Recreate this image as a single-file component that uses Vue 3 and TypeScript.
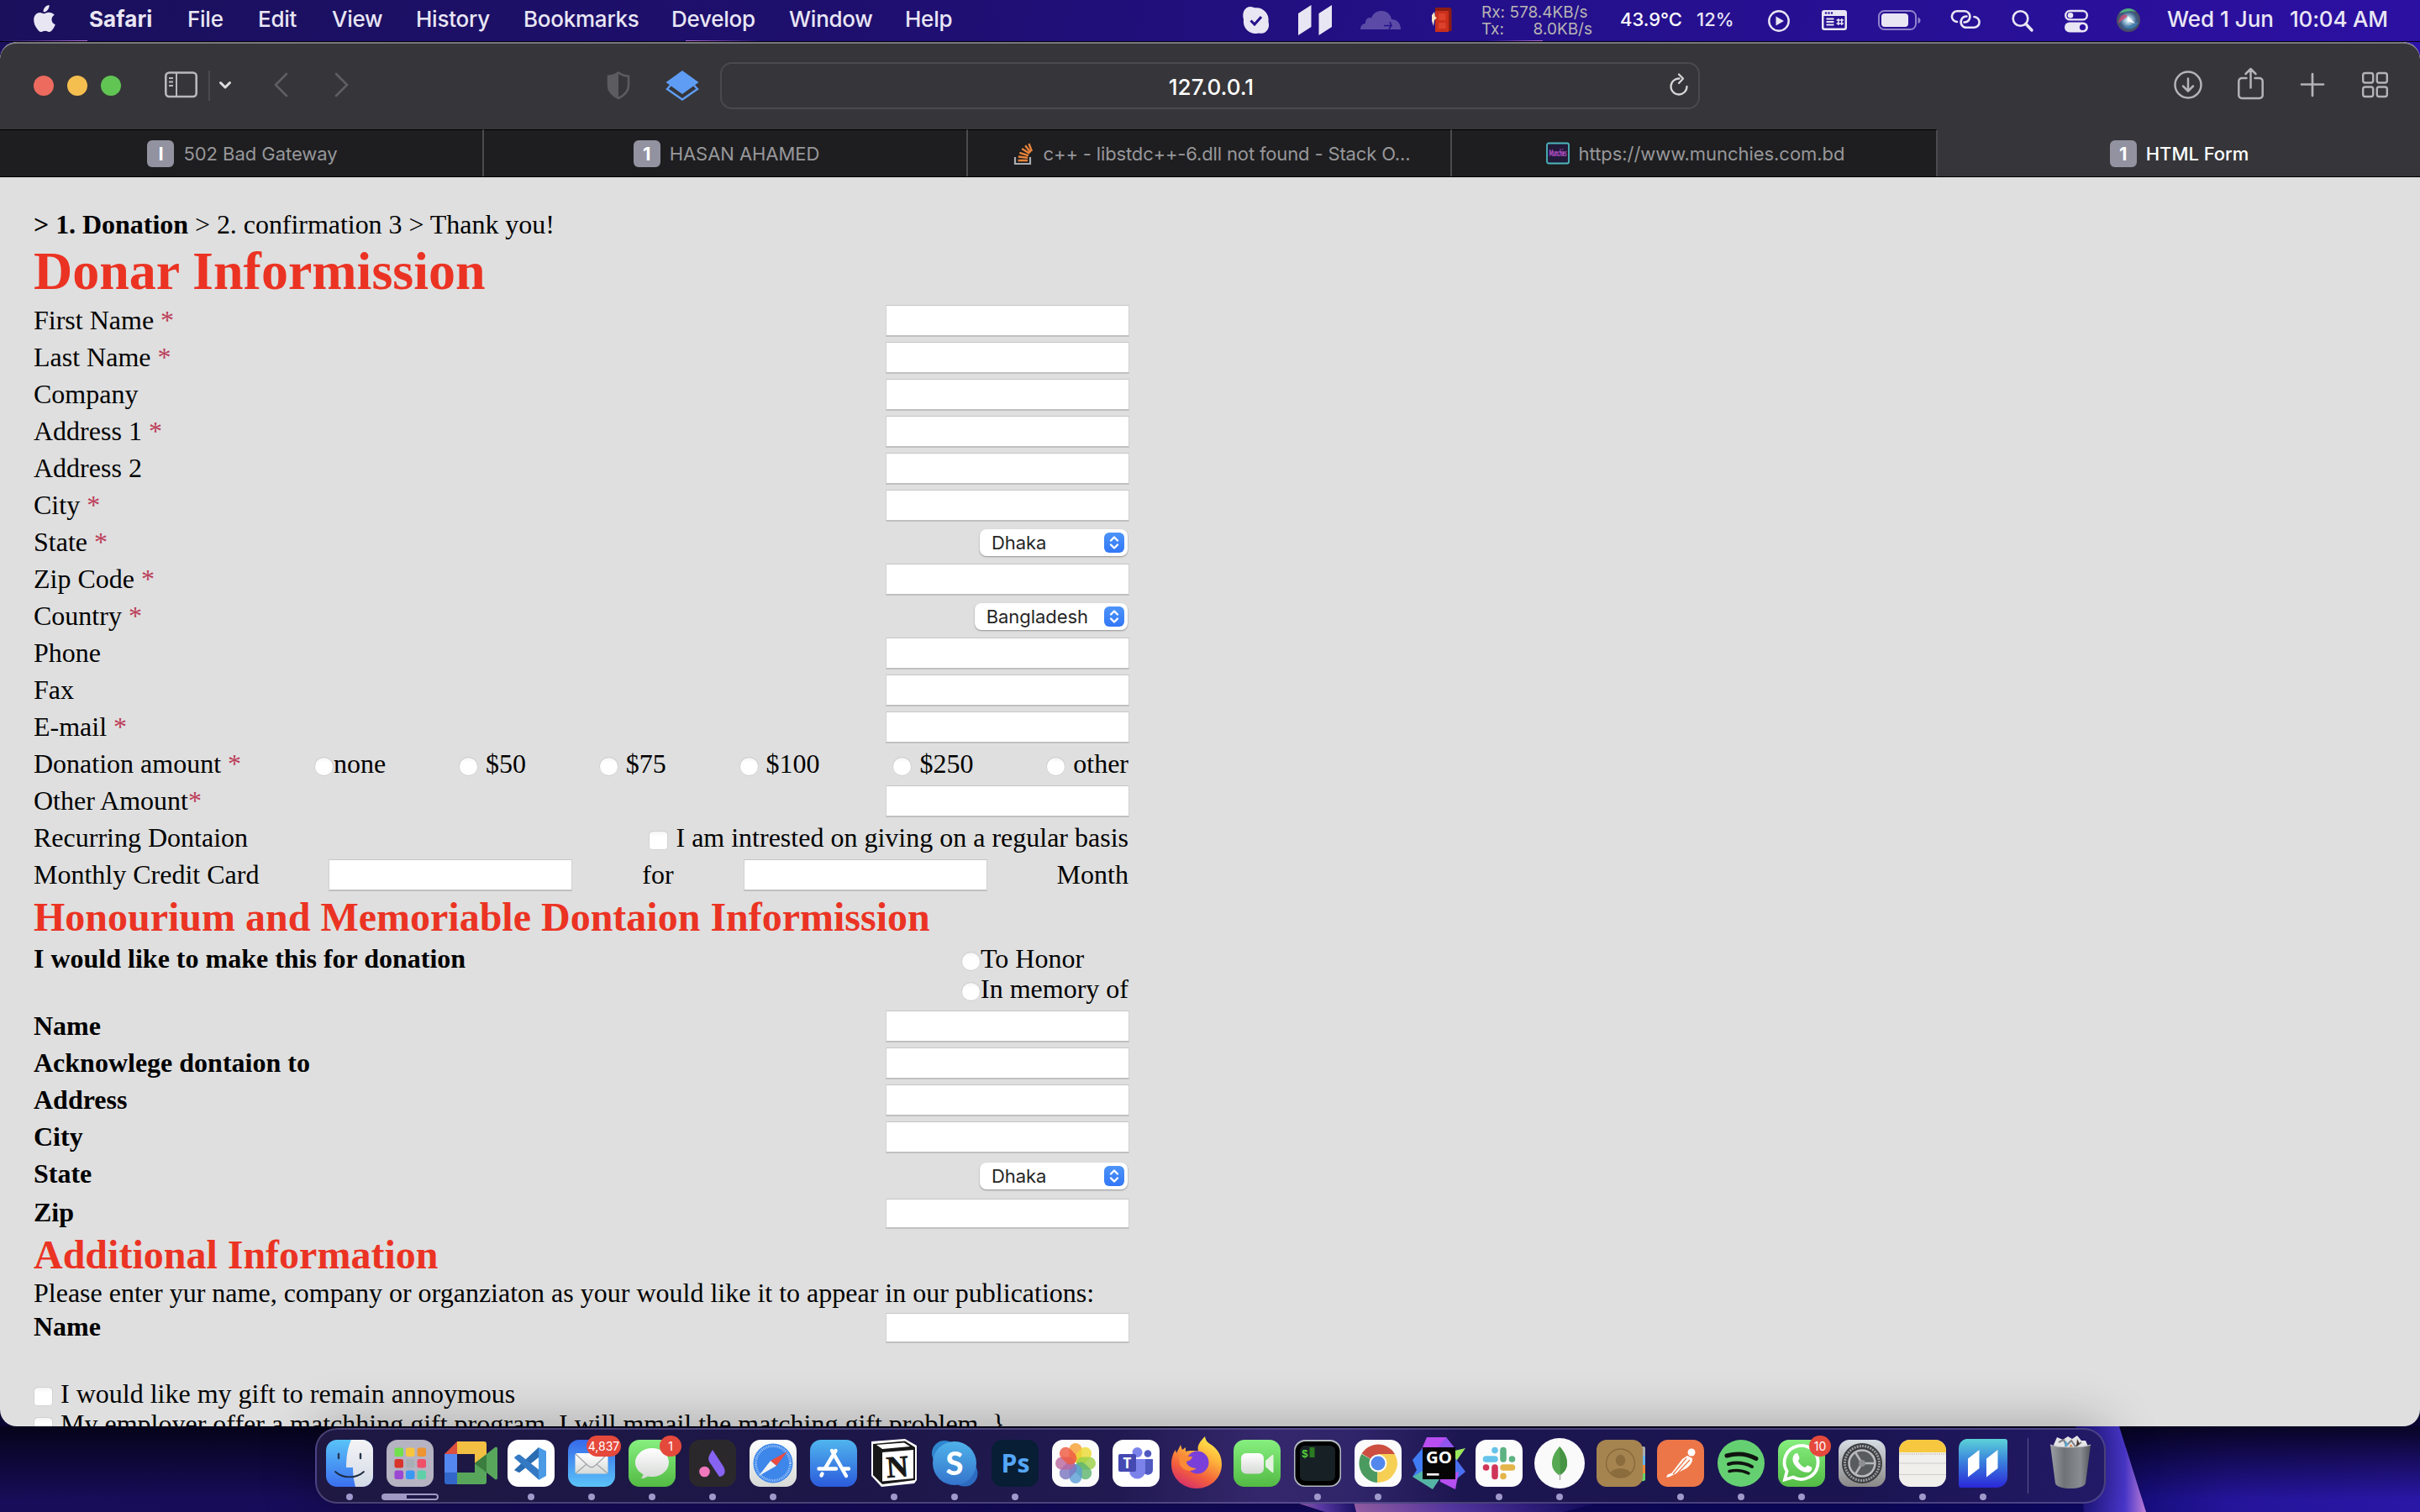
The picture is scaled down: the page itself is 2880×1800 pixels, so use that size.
<script setup lang="ts">
interface Field {
  label: string
  required?: boolean
  select?: string
}

interface MenuEntry {
  label: string
  width: number
}

interface Tab {
  title: string
  badge?: string
  icon?: 'stack' | 'munchies'
  active?: boolean
}

const menu: MenuEntry[] = [
  { label: 'File', width: 84 },
  { label: 'Edit', width: 88 },
  { label: 'View', width: 100 },
  { label: 'History', width: 128 },
  { label: 'Bookmarks', width: 176 },
  { label: 'Develop', width: 140 },
  { label: 'Window', width: 138 },
  { label: 'Help', width: 60 },
]

const tabs: Tab[] = [
  { title: '502 Bad Gateway', badge: 'I' },
  { title: 'HASAN AHAMED', badge: '1' },
  { title: 'c++ - libstdc++-6.dll not found - Stack O...', icon: 'stack' },
  { title: 'https://www.munchies.com.bd', icon: 'munchies' },
  { title: 'HTML Form', badge: '1', active: true },
]

const donorFields: Field[] = [
  { label: 'First Name', required: true },
  { label: 'Last Name', required: true },
  { label: 'Company' },
  { label: 'Address 1', required: true },
  { label: 'Address 2' },
  { label: 'City', required: true },
  { label: 'State', required: true, select: 'Dhaka' },
  { label: 'Zip Code', required: true },
  { label: 'Country', required: true, select: 'Bangladesh' },
  { label: 'Phone' },
  { label: 'Fax' },
  { label: 'E-mail', required: true },
]

const amounts = ['none', '$50', '$75', '$100', '$250', 'other']

const honorFields: Field[] = [
  { label: 'Name' },
  { label: 'Acknowlege dontaion to' },
  { label: 'Address' },
  { label: 'City' },
  { label: 'State', select: 'Dhaka' },
  { label: 'Zip' },
]

const padColors = [
  '#72e04e', '#f7c63f', '#ee9430',
  '#d8342c', '#a9b0b5', '#f0506a',
  '#9a47d2', '#3a98f5', '#5fd0a8',
]

const petals = [
  '#f5a033', '#ecd935', '#9ccf45', '#5fb56f',
  '#5b9fd6', '#7a76c0', '#b9689f', '#ee5a41',
]
</script>

<template>
  <div class="desktop">
    <svg class="defs" width="0" height="0">
      <defs>
        <linearGradient id="gFinder" x1="0" y1="0" x2="0" y2="1"><stop offset="0" stop-color="#59c3f7" /><stop offset="1" stop-color="#3b6ff0" /></linearGradient>
        <linearGradient id="gFace" x1="0" y1="0" x2="0" y2="1"><stop offset="0" stop-color="#f4f4f6" /><stop offset="1" stop-color="#d3dae6" /></linearGradient>
        <linearGradient id="gMail" x1="0" y1="0" x2="0" y2="1"><stop offset="0" stop-color="#3669ea" /><stop offset="1" stop-color="#5bc3f8" /></linearGradient>
        <linearGradient id="gGreen" x1="0" y1="0" x2="0" y2="1"><stop offset="0" stop-color="#86ef7f" /><stop offset="1" stop-color="#53bb44" /></linearGradient>
        <linearGradient id="gWhite" x1="0" y1="0" x2="0" y2="1"><stop offset="0" stop-color="#ffffff" /><stop offset="1" stop-color="#d6d9d6" /></linearGradient>
        <linearGradient id="gStore" x1="0" y1="0" x2="0" y2="1"><stop offset="0" stop-color="#50b5ee" /><stop offset="1" stop-color="#2b5bdc" /></linearGradient>
        <linearGradient id="gSkype" x1="0" y1="0" x2="0" y2="1"><stop offset="0" stop-color="#4fb2ea" /><stop offset="1" stop-color="#3474cc" /></linearGradient>
        <linearGradient id="gFox" x1="0.8" y1="0" x2="0.3" y2="1"><stop offset="0" stop-color="#fff04f" /><stop offset="0.35" stop-color="#ffb43a" /><stop offset="0.7" stop-color="#f4603c" /><stop offset="1" stop-color="#d72f6b" /></linearGradient>
        <linearGradient id="gGo" x1="0" y1="0" x2="0" y2="1"><stop offset="0" stop-color="#b04cf0" /><stop offset="0.5" stop-color="#3f7cf3" /><stop offset="0.8" stop-color="#54a0d0" /><stop offset="1" stop-color="#8a55f0" /></linearGradient>
        <linearGradient id="gBars" x1="0" y1="0" x2="0" y2="1"><stop offset="0" stop-color="#5cd3d8" /><stop offset="0.45" stop-color="#3a83dd" /><stop offset="1" stop-color="#2b27d8" /></linearGradient>
        <linearGradient id="gGear" x1="0" y1="0" x2="0" y2="1"><stop offset="0" stop-color="#d6dde4" /><stop offset="1" stop-color="#8a8888" /></linearGradient>
        <linearGradient id="gTrash" x1="0" y1="0" x2="1" y2="0"><stop offset="0" stop-color="#9c9fa3" /><stop offset="0.35" stop-color="#6f7276" /><stop offset="0.75" stop-color="#898c90" /><stop offset="1" stop-color="#55585c" /></linearGradient>
        <radialGradient id="gSiri"><stop offset="0" stop-color="#ffffff" /><stop offset="0.3" stop-color="#9fc6dc" /><stop offset="0.7" stop-color="#3d5c86" /><stop offset="1" stop-color="#4b4a5c" /></radialGradient>
        <linearGradient id="gBlade" x1="0" y1="0" x2="1" y2="0"><stop offset="0" stop-color="#1b1279" /><stop offset="0.7" stop-color="#4a38cf" /><stop offset="1" stop-color="#c07fd8" /></linearGradient>
        <linearGradient id="gPink" x1="0" y1="0" x2="1" y2="0"><stop offset="0" stop-color="#d889d6" /><stop offset="0.4" stop-color="#7a4fd2" /><stop offset="1" stop-color="#140c6a" /></linearGradient>
      </defs>
    </svg>

    <header class="menubar">
      <svg class="apple" width="28" height="50" viewBox="0 0 28 50">
        <path d="M19.600 6c.3 2.300-.7 4.400-2 5.900-1.300 1.500-3.200 2.500-5 2.300-.3-2.200.8-4.300 2-5.700C15.900 7.100 17.900 6.100 19.600 6zM25.800 17.800c-2 1.200-3.300 3-3.300 5.500 0 2.900 1.700 4.900 4.300 5.900-.6 1.900-1.600 3.800-2.900 5.500-1.200 1.700-2.500 3.300-4.500 3.300-1.900 0-2.500-1.200-4.700-1.200-2.200 0-2.900 1.200-4.700 1.200-2 0-3.500-1.800-4.700-3.600C2.800 31.500 1.200 27.600 1.200 23.800c0-5.800 3.700-8.900 7.300-8.900 2 0 3.600 1.300 4.900 1.300 1.200 0 3.200-1.400 5.500-1.400 2.700 0 5.300 1.100 6.900 3z" />
      </svg>
      <b class="app-name">Safari</b>
      <span v-for="m in menu" :key="m.label" class="menu-item" :style="{ width: m.width + 'px' }">{{ m.label }}</span>
      <div class="status">
        <svg width="34" height="50" viewBox="0 0 34 50"><path d="M10 8c2.500 0 4 .8 5 1.300C25 8 33 16 31.500 26c2.500 8-3.500 15.500-11 13.500C10 42 .5 34 2 23.500-.5 15 3.500 8 10 8z" /><path d="M10.500 24.500l4.500 4.500 8-9" fill="none" stroke="#24108a" stroke-width="3" /></svg>
        <svg width="40" height="50" viewBox="0 0 40 50" class="s-bars"><path d="M0 16L15.500 6v26L0 42zM24.500 16L40 6v26L24.500 42z" /></svg>
        <svg width="48" height="50" viewBox="0 0 48 50" class="s-cloud"><path d="M0 35c0-4 2.500-7 6-7-.5-5 3.500-8 7-6.500C15 15.500 20 13 25 13c7 0 11 4.500 12 10 6 0 11 4 11 12z" /><path d="M28 30.500h9M35 26l2 4.500-3 4" stroke="#24108a" stroke-width="1.500" fill="none" /></svg>
        <svg width="26" height="50" viewBox="0 0 26 50" class="s-door"><path d="M5 9h18l1.500 2v26H5z" fill="#8c1c12" /><path d="M5 13h16v25H5z" fill="#c92f1c" /><path d="M9 16h8.500v8H9zM9 27h8.500v7H9z" fill="#dc412b" /><path d="M1 18l3-4 1 6 2 1-3 3-1 7-2-6z" fill="#f6e6c4" /></svg>
        <div class="net"><span>Rx: 578.4KB/s</span><span class="tx">Tx:<i>8.0KB/s</i></span></div>
        <span class="temp">43.9°C</span>
        <span class="cpu">12%</span>
        <svg width="26" height="50" viewBox="0 0 26 50" class="s-play"><circle cx="13" cy="25" r="11.700" fill="none" stroke="#e9e6f4" stroke-width="2.400" /><path d="M9.500 19.500l9.500 5.500-9.500 5.500z" /></svg>
        <svg width="30" height="50" viewBox="0 0 30 50" class="s-key"><path fill-rule="evenodd" d="M3 12h24a3 3 0 0 1 3 3v18a3 3 0 0 1-3 3H3a3 3 0 0 1-3-3V15a3 3 0 0 1 3-3zm-.500 7v13.500a1 1 0 0 0 1 1h23a1 1 0 0 0 1-1V19z" /><g fill="#2a109a"><circle cx="5" cy="15.500" r="1.200" /><circle cx="8.500" cy="15.500" r="1.200" /><circle cx="12" cy="15.500" r="1.200" /></g><path d="M5.500 22.500h9M5.500 26h9M5.500 29.500h9" stroke="#e9e6f4" stroke-width="1.800" /><path d="M19.800 22v8M23.800 22v8M17.500 24h8.500M17.500 28h8.500" stroke="#e9e6f4" stroke-width="1.500" /></svg>
        <svg width="52" height="50" viewBox="0 0 52 50" class="s-batt"><rect x="1" y="13" width="44" height="22" rx="6.500" fill="none" stroke="#8f83cc" stroke-width="2" /><rect x="4" y="16" width="32" height="16" rx="4" /><path d="M47.500 20.500c2 .7 3 2.200 3 3.800s-1 3.100-3 3.800z" fill="#8f83cc" /></svg>
        <svg width="36" height="50" viewBox="0 0 36 50" class="s-link"><g fill="none" stroke="#e9e6f4" stroke-width="2.600" stroke-linecap="round"><path d="M8 26a6.300 6.300 0 0 1 0.500-12.700h8.500a6.500 6.500 0 0 1 6 8.700c-1 3-3.500 4.500-6.500 4.500" /><path d="M28.500 20a6.300 6.300 0 0 1-.5 12.700h-9a6.500 6.500 0 0 1-6-8.700c1-3 3.500-4.500 6.500-4.500" /></g></svg>
        <svg width="26" height="50" viewBox="0 0 26 50" class="s-search"><circle cx="10.500" cy="22" r="8.800" fill="none" stroke="#e9e6f4" stroke-width="2.600" /><path d="M17 28.500l7 7.500" stroke="#e9e6f4" stroke-width="3.500" stroke-linecap="round" /></svg>
        <svg width="28" height="50" viewBox="0 0 28 50" class="s-cc"><rect x="1.200" y="13" width="25.600" height="10.400" rx="5.200" fill="none" stroke="#e9e6f4" stroke-width="2.400" /><circle cx="7" cy="18.200" r="3.300" /><rect x="0" y="26.500" width="28" height="12" rx="6" /><circle cx="21.500" cy="32.500" r="3.600" fill="#2c10a0" /></svg>
        <svg width="28" height="50" viewBox="0 0 28 50" class="s-siri"><circle cx="14" cy="24" r="14" fill="url(#gSiri)" /><path d="M3 16c5-7 14-8 20-2-7-2-13 0-20 2z" fill="#4fae82" /><path d="M2 28c1-8 5-12 10-10 3 2-5 5-10 10z" fill="#c94a6e" opacity=".8" /><path d="M26 26c-3 8-12 10-18 6 8 0 12-4 18-6z" fill="#3f7fae" /><path d="M13 19l4 4 5 5-9-3z" fill="#fff" /></svg>
        <span class="date">Wed 1 Jun</span>
        <span class="time">10:04 AM</span>
      </div>
      <i class="glint g1"></i><i class="glint g2"></i><i class="glint g3"></i>
    </header>

    <main class="window">
      <div class="toolbar">
        <i class="light red"></i><i class="light yellow"></i><i class="light green"></i>
        <svg class="t-side" width="39" height="36" viewBox="0 0 39 36"><rect x="1.300" y="2.500" width="36.400" height="28.500" rx="4" fill="none" stroke="#b9b8bb" stroke-width="2.600" /><path d="M14 3v28M5 9h5M5 13.500h5M5 18h5" stroke="#b9b8bb" stroke-width="2" /></svg>
        <i class="t-sep"></i>
        <svg class="t-down" width="14" height="36" viewBox="0 0 14 36"><path d="M1.500 14.500l5.500 5.500 5.500-5.500" fill="none" stroke="#dededf" stroke-width="3" stroke-linecap="round" stroke-linejoin="round" /></svg>
        <svg class="t-back" width="16" height="36" viewBox="0 0 16 36"><path d="M15 4L2 17l13 13" fill="none" stroke="#5f5e63" stroke-width="2.600" stroke-linecap="round" /></svg>
        <svg class="t-fwd" width="16" height="36" viewBox="0 0 16 36"><path d="M1 4l13 13L1 30" fill="none" stroke="#5f5e63" stroke-width="2.600" stroke-linecap="round" /></svg>
        <svg class="t-shield" width="28" height="36" viewBox="0 0 28 36"><path d="M14 2.500c4 3 8 4 12 4.300v11C26 25 20 30 14 33 8 30 2 25 2 17.800v-11C6 6.500 10 5.500 14 2.500z" fill="none" stroke="#5c5b60" stroke-width="2.600" /><path d="M14 1.500v32C7 30 1 25 1 17.500V6c5 0 9-1.500 13-4.500z" fill="#5c5b60" /></svg>
        <svg class="t-dia" width="40" height="36" viewBox="0 0 40 36"><path d="M7 16.500L2 22l18 12.500L38 22l-5-5.500" fill="none" stroke="#5e9df3" stroke-width="2.400" /><path d="M20 0l19.500 14L20 28 .5 14z" fill="#5e9df3" /></svg>
        <div class="url">
          <span>127.0.0.1</span>
          <svg width="22" height="36" viewBox="0 0 22 36"><path d="M11.500 9.500A9.500 9.500 0 1 0 20.500 19" fill="none" stroke="#d4d4d5" stroke-width="2.300" stroke-linecap="round" /><path d="M11 4.500l5 5-5 5.500" fill="none" stroke="#d4d4d5" stroke-width="2.300" stroke-linecap="round" stroke-linejoin="round" /></svg>
        </div>
        <svg class="t-dl" width="34" height="36" viewBox="0 0 34 36"><g fill="none" stroke="#b4b3b6" stroke-width="2.500" stroke-linecap="round" stroke-linejoin="round"><circle cx="17" cy="17" r="15.500" /><path d="M17 9.500v15M11 18.500l6 6 6-6" /></g></svg>
        <svg class="t-share" width="31" height="36" viewBox="0 0 31 36"><g fill="none" stroke="#b4b3b6" stroke-width="2.500" stroke-linecap="round" stroke-linejoin="round"><path d="M10.500 9H5a3.700 3.700 0 0 0-3.700 3.700v16.600A3.700 3.700 0 0 0 5 33h21a3.700 3.700 0 0 0 3.700-3.700V12.700A3.700 3.700 0 0 0 26 9h-5.500M15.500 20.500V-2M9.500 4l6-6 6 6" /></g></svg>
        <svg class="t-plus" width="28" height="36" viewBox="0 0 28 36"><path d="M14 4v26M1 16.500h26" stroke="#b4b3b6" stroke-width="2.700" stroke-linecap="round" /></svg>
        <svg class="t-grid" width="31" height="36" viewBox="0 0 31 36"><g fill="none" stroke="#b4b3b6" stroke-width="2.400"><rect x="1.200" y="3" width="12" height="11.500" rx="2.500" /><rect x="17.800" y="3" width="12" height="11.500" rx="2.500" /><rect x="1.200" y="19.500" width="12" height="11.500" rx="2.500" /><rect x="17.800" y="19.500" width="12" height="11.500" rx="2.500" /></g></svg>
      </div>

      <nav class="tabs">
        <div v-for="t in tabs" :key="t.title" class="tab" :class="{ active: t.active, dense: t.icon === 'stack' }">
          <i v-if="t.badge" class="badge">{{ t.badge }}</i>
          <svg v-else-if="t.icon === 'stack'" width="24" height="28" viewBox="0 0 24 28"><path d="M2 18v8h18v-8" fill="none" stroke="#a9adb2" stroke-width="2.200" /><g stroke="#e8833a" stroke-width="2.400"><path d="M5.500 22h11.500M5.800 17.500l11.300 1.200M7.300 12.800l10.600 3.400M10.200 8l9 5.800M14.200 4.300l6.300 8.300M18.500 2l3.400 9" /></g></svg>
          <svg v-else width="28" height="28" viewBox="0 0 28 28"><rect x="1" y="1.500" width="26" height="24" rx="2" fill="#211a38" stroke="#4db7bd" stroke-width="1.800" /><text x="14" y="8.700" text-anchor="middle" font-family="Lato, sans-serif" font-style="italic" font-weight="700" font-size="5.200" transform="scale(1 2)" fill="#cf5be0">Munchies</text></svg>
          <span>{{ t.title }}</span>
        </div>
      </nav>

      <section class="page">
        <p class="steps"><b>&gt; 1. Donation</b> &gt; 2. confirmation 3 &gt; Thank you!</p>
        <h1>Donar Informission</h1>
        <div v-for="f in donorFields" :key="f.label" class="row">
          <label>{{ f.label }}<em v-if="f.required"> *</em></label>
          <span v-if="f.select" class="select"><span>{{ f.select }}</span>
            <svg width="24" height="24" viewBox="0 0 24 24"><path d="M8 9.500L12 5.500l4 4M8 14.500l4 4 4-4" /></svg></span>
          <i v-else class="input"></i>
        </div>
        <div class="row">
          <label>Donation amount<em> *</em></label>
          <span v-for="(a, i) in amounts" :key="a" class="choice" :class="{ spaced: i > 0 }"><i class="radio"></i>{{ a }}</span>
        </div>
        <div class="row"><label>Other Amount<em>*</em></label><i class="input"></i></div>
        <div class="row"><label>Recurring Dontaion</label><span class="choice spaced"><i class="check"></i>I am intrested on giving on a regular basis</span></div>
        <div class="row"><label>Monthly Credit Card</label><i class="input"></i><span>for</span><i class="input"></i><span>Month</span></div>

        <h2 class="honor">Honourium and Memoriable Dontaion Informission</h2>
        <div class="purpose">
          <b>I would like to make this for donation</b>
          <div>
            <span class="choice"><i class="radio"></i>To Honor</span>
            <span class="choice"><i class="radio"></i>In memory of</span>
          </div>
        </div>
        <div v-for="f in honorFields" :key="f.label" class="row strong" :class="{ picker: f.select }">
          <label>{{ f.label }}</label>
          <span v-if="f.select" class="select"><span>{{ f.select }}</span>
            <svg width="24" height="24" viewBox="0 0 24 24"><path d="M8 9.500L12 5.500l4 4M8 14.500l4 4 4-4" /></svg></span>
          <i v-else class="input"></i>
        </div>

        <h2>Additional Information</h2>
        <p>Please enter yur name, company or organziaton as your would like it to appear in our publications:</p>
        <div class="row strong"><label>Name</label><i class="input"></i></div>
        <div class="options">
          <span class="choice spaced"><i class="check"></i>I would like my gift to remain annoymous</span>
          <span class="choice spaced"><i class="check"></i>My employer offer a matchhing gift program. I will mmail the matching gift problem. }</span>
        </div>
      </section>
    </main>

    <footer class="shelf">
      <svg class="wallpaper" width="2880" height="102" viewBox="0 0 2880 102">
        <path d="M1540 90L1611 92L1620 102H1577z" fill="url(#gPink)" opacity=".8" />
        <path d="M1611 90L1900 92L1860 102H1614z" fill="url(#gPink)" opacity=".75" />
        <path d="M2470 0H2522L2554 102H2480z" fill="url(#gBlade)" />
      </svg>
      <div class="dock">
        <div class="app running"><svg viewBox="0 0 56 56">
          <rect width="56" height="56" rx="13" fill="url(#gFinder)" />
          <path d="M30 0h13a13 13 0 0 1 13 13v30a13 13 0 0 1-13 13h-8c-2-8-3-14-3-23h-8c0-14 2-24 6-33z" fill="url(#gFace)" />
          <path d="M15 17v5M41 17v5" stroke="#26364f" stroke-width="2.400" stroke-linecap="round" /><path d="M11 38c9 8.500 25 8.500 34 0" fill="none" stroke="#1c2a40" stroke-width="1.800" stroke-linecap="round" />
        </svg></div>
        <div class="app"><svg viewBox="0 0 56 56">
          <rect width="56" height="56" rx="13" fill="#b6b3c2" />
          <rect v-for="(c, i) in padColors" :key="c" :x="9.500 + (i % 3) * 13.500" :y="9.500 + Math.floor(i / 3) * 13.500" width="10.500" height="10.500" rx="2.500" :fill="c" />
        </svg><i class="progress"></i></div>
        <div class="app"><svg viewBox="0 0 56 56">
          <path d="M-3 17L12 2v15z" fill="#db4f41" /><path d="M12 2h32a3 3 0 0 1 3 3v13L33 28V17H12z" fill="#f2bf43" /><path d="M-3 17h15v22H-3z" fill="#5587f0" /><path d="M-3 39h15v14H0a3 3 0 0 1-3-3z" fill="#3267c9" /><path d="M12 39h21V28l14 10v12a3 3 0 0 1-3 3H12z" fill="#58a65c" /><path d="M33 28l14-11v22z" fill="#3b7d3e" /><path d="M47 17l10-8q3-1.500 3 2v34q0 3.500-3 2l-10-8z" fill="#58a65c" />
        </svg></div>
        <div class="app running"><svg viewBox="0 0 56 56">
          <rect width="56" height="56" rx="13" fill="#fff" />
          <path d="M8.500 35.500l4-3.700L37 9v12L15 38.500q-1.500 1-2.500 0l-4-2q-.500-.5 0-1z" fill="#2b6db3" /><path d="M8.500 20.500l3.500-2.500q1.500-1 3 0L37 35.500v12L8.500 22q-.700-1 0-1.500z" fill="#3479c3" /><path d="M37 9l9 4.500V43l-9 5z" fill="#4a9ae6" />
        </svg></div>
        <div class="app running"><svg viewBox="0 0 56 56">
          <rect width="56" height="56" rx="13" fill="url(#gMail)" />
          <rect x="8.500" y="16" width="39" height="24.500" rx="2" fill="url(#gWhite)" /><path d="M9 17l15 14q4 3.500 8 0l15-14M9 40l13-11M47 40L34 29" fill="none" stroke="#a3a6aa" stroke-width="1.300" />
        </svg><b class="count wide">4,837</b></div>
        <div class="app running"><svg viewBox="0 0 56 56">
          <rect width="56" height="56" rx="13" fill="url(#gGreen)" />
          <path d="M28 10c11 0 20 7.500 20 17s-9 17-20 17c-2 0-3.500-.2-5-.6-2 1.500-5 2.600-8 2.600 1.500-1.500 2.300-3 2.300-5C11.500 38 8 33 8 27c0-9.500 9-17 20-17z" fill="url(#gWhite)" />
        </svg><b class="count">1</b></div>
        <div class="app running"><svg viewBox="0 0 56 56">
          <rect width="56" height="56" rx="13" fill="#2b282b" />
          <path d="M28 12l13 20c4 7 0 12-5 12L24 26c-2-4 0-8 4-14z" fill="#8663f3" /><circle cx="18.500" cy="38" r="6.300" fill="#f078bd" />
        </svg></div>
        <div class="app running"><svg viewBox="0 0 56 56">
          <rect width="56" height="56" rx="13" fill="url(#gWhite)" />
          <circle cx="28" cy="28" r="23.500" fill="#3d86ea" /><circle cx="28" cy="28" r="20.500" fill="none" stroke="#bcd9fb" stroke-width="3" stroke-dasharray=".800 1.350" /><path d="M45 14L32 31l-7-6z" fill="#ec4b40" /><path d="M11 43l14-18 7 6z" fill="#f3f3f3" />
        </svg></div>
        <div class="app"><svg viewBox="0 0 56 56">
          <rect width="56" height="56" rx="13" fill="url(#gStore)" />
          <g stroke="#fff" stroke-width="4.400" stroke-linecap="round"><path d="M30.500 13L18 34M26 13l17 30M10.500 34.500H31M39 34.500h7M14.500 40.500l-1 2" /></g>
        </svg></div>
        <div class="app running"><svg viewBox="0 0 56 56">
          <path d="M1 2l40-3 14 8v41l-3 4-39 4L1 43z" fill="#fff" /><path d="M3 5l38-3.500L53 9v39l-39 5L3 42z" fill="#171717" /><path d="M7 6l33-2.500 7 4.500-33 3z" fill="#fff" /><path d="M14 15l37-3v34l-37 3.500z" fill="#fff" /><text x="32" y="44" text-anchor="middle" font-family="Liberation Serif, serif" font-weight="700" font-size="36" fill="#171717" stroke="#171717" stroke-width=".8" transform="rotate(-4 32 32)">N</text>
        </svg></div>
        <div class="app running"><svg viewBox="0 0 56 56">
          <circle cx="16" cy="16" r="15" fill="#2f86cf" /><circle cx="40" cy="40" r="15.500" fill="#2c6bc1" /><circle cx="28" cy="28" r="26" fill="url(#gSkype)" /><text x="28" y="42" text-anchor="middle" font-family="Lato, sans-serif" font-weight="900" font-size="38" fill="#fff">S</text>
        </svg></div>
        <div class="app running"><svg viewBox="0 0 56 56">
          <rect width="56" height="56" rx="13" fill="#071e34" /><text x="28.500" y="38.500" text-anchor="middle" font-family="Open Sans, sans-serif" font-weight="700" font-size="31" textLength="34" lengthAdjust="spacingAndGlyphs" fill="#55a6f8">Ps</text>
        </svg></div>
        <div class="app"><svg viewBox="0 0 56 56">
          <rect width="56" height="56" rx="13" fill="#fbfbfb" />
          <rect v-for="(c, i) in petals" :key="c" x="20.500" y="4" width="15" height="23" rx="7.500" :fill="c" opacity=".82" :transform="`rotate(${i * 45} 28 28)`" />
        </svg></div>
        <div class="app"><svg viewBox="0 0 56 56">
          <rect width="56" height="56" rx="13" fill="#fff" />
          <circle cx="42" cy="16.500" r="4.300" fill="#5059c0" /><path d="M37 23h11v13a6 6 0 0 1-11 3z" fill="#5059c0" /><circle cx="29.500" cy="15" r="6" fill="#7b83eb" /><path d="M20 23h19v14a9.500 9.500 0 0 1-19 0z" fill="#7b83eb" /><rect x="7" y="17" width="21" height="21" rx="2" fill="#4549b2" /><text x="17.500" y="34" text-anchor="middle" font-family="Open Sans, sans-serif" font-weight="700" font-size="17" fill="#fff">T</text>
        </svg></div>
        <div class="app"><svg viewBox="0 0 56 56">
          <path d="M38-4c1 5 2 6 6 9 5 3 14 10 14 24 0 17-14 29-30 29S-2 46-2 29c0-7 2-13 5-17l1 4 5-10 2 6 4-3v5c6-2 12 0 15-1-2-6 3-12 8-17z" fill="url(#gFox)" /><circle cx="29" cy="27" r="13.500" fill="#7a3fd8" /><path d="M7 20c6-3 10 0 16 0-1 4-4 5-7 6 0 4 5 8 12 8-8 6-17 2-20-5z" fill="#f98a36" />
        </svg></div>
        <div class="app"><svg viewBox="0 0 56 56">
          <rect width="56" height="56" rx="13" fill="url(#gGreen)" /><rect x="9" y="16" width="27" height="24.500" rx="6" fill="url(#gWhite)" /><path d="M38 25l8-7q1.500-1 1.500 1v19q0 2-1.500 1l-8-7z" fill="#e3f3e0" />
        </svg></div>
        <div class="app running"><svg viewBox="0 0 56 56">
          <rect width="56" height="56" rx="13" fill="#b5bcc2" /><rect x="1.500" y="2" width="53" height="52.500" rx="12" fill="#000" /><rect x="7" y="7" width="42" height="42" rx="6" fill="#172024" /><text x="9" y="20.500" font-family="Liberation Mono, monospace" font-weight="700" font-size="13" fill="#55d33a">$</text><rect x="18.500" y="9" width="6" height="12" fill="#2b7a22" />
        </svg></div>
        <div class="app running"><svg viewBox="0 0 56 56">
          <rect width="56" height="56" rx="13" fill="#fbfbfb" /><path d="M28 28L8.500 16.500A23 23 0 0 1 48 17z" fill="#cc4f41" /><path d="M28 28l-19.700-11A23 23 0 0 0 27 51z" fill="#4b9b60" /><path d="M28 28l-1 23a23 23 0 0 0 21-34H28z" fill="#f6cf55" /><circle cx="28" cy="28" r="10.500" fill="#fff" /><circle cx="28" cy="28" r="8.500" fill="#5288ee" />
        </svg></div>
        <div class="app"><svg viewBox="0 0 56 56">
          <path d="M-3 24L9 10l3 36-15-2 5-8z" fill="#3f7cf3" /><path d="M14-3h23l11 14H8z" fill="#b84df0" /><path d="M37-3l11 14H26z" fill="#8f55ee" /><path d="M60 10l-13 3-4 4 5 10z" fill="#9be85e" /><path d="M48 22l12 16-12 10z" fill="#4a70f2" /><path d="M-3 44l14-8 20 8-10 15z" fill="#55b5a4" /><path d="M30 44l22-6-4 21-18-9z" fill="#b44ff0" /><rect x="9" y="9" width="39" height="38" fill="#050505" /><text x="28.500" y="27.500" text-anchor="middle" font-family="Open Sans, sans-serif" font-weight="700" font-size="20" textLength="31" lengthAdjust="spacingAndGlyphs" fill="#fff">GO</text><rect x="14" y="40" width="14.500" height="2.600" fill="#fff" />
        </svg></div>
        <div class="app running"><svg viewBox="0 0 56 56">
          <rect width="56" height="56" rx="13" fill="#fcfcfc" /><g stroke-width="7.600" stroke-linecap="round"><path d="M12.500 23h10.500M23 12.500v.1" stroke="#66c3ea" /><path d="M33 12.500V23M43.500 23h-.1" stroke="#5db283" /><path d="M43.500 33H33M33 43.500v-.1" stroke="#e3b54a" /><path d="M23 43.500V33M12.500 33h.1" stroke="#cf3558" /></g>
        </svg></div>
        <div class="app running"><svg viewBox="0 0 56 56">
          <circle cx="28" cy="28" r="30" fill="#fafafa" /><path d="M28 8c6 7 9 13 9 20 0 7-4 11-8 14h-2c-4-3-8-7-8-14 0-7 3-13 9-20z" fill="#57a852" /><path d="M28 8c6 7 9 13 9 20 0 7-4 11-8 14z" fill="#469344" /><path d="M28.500 40v8" stroke="#a8aaa6" stroke-width="1.400" />
        </svg></div>
        <div class="app"><svg viewBox="0 0 56 56">
          <path d="M53 8h3a2 2 0 0 1 2 2v9h-5z" fill="#a9adb0" /><path d="M53 19h5v11h-5z" fill="#66b4ea" /><path d="M53 30h5v10h-5z" fill="#ec8b35" /><path d="M53 40h5v8q-2 2-5 1z" fill="#69cf69" /><rect width="55" height="56" rx="12" fill="#a68450" /><g fill="none" stroke="#86683a" stroke-width="1.300"><circle cx="28.500" cy="28" r="17" /></g><ellipse cx="28.500" cy="24.500" rx="5.700" ry="6.700" fill="#8b6c3d" /><path d="M16 39.500c5-7 20-7 25 0-6 7-19 7-25 0z" fill="#8b6c3d" />
        </svg></div>
        <div class="app running"><svg viewBox="0 0 56 56">
          <rect width="56" height="56" rx="13" fill="#ed7648" /><circle cx="41" cy="15" r="4.500" fill="#fff" /><path d="M36 19l6 3c1 4-3 9-7 12L15 44l-4 1 1.500-3.500 5-2L30 23z" fill="#fff" /><path d="M35 22L19 41M39 24L24 40" stroke="#ed7648" stroke-width="1.200" />
        </svg></div>
        <div class="app running"><svg viewBox="0 0 56 56">
          <circle cx="28" cy="28" r="28" fill="#65d072" /><g fill="none" stroke="#101510" stroke-linecap="round"><path d="M11 19c12-3.500 24-2.500 35 3.500" stroke-width="5" /><path d="M13 29c9-2.500 19-1.500 28 3" stroke-width="4" /><path d="M14 37.500c8-2 16-1 23 2.500" stroke-width="3.400" /></g>
        </svg></div>
        <div class="app running"><svg viewBox="0 0 56 56">
          <rect width="56" height="56" rx="13" fill="url(#gGreen)" /><path d="M8 47.500l2.600-10A20 20 0 1 1 18 44.500z" fill="none" stroke="#fff" stroke-width="3.800" /><path d="M20 17c2-1.500 3.500-1 4 .5l1.500 4c.500 1.500-2 3-1.500 4 2 4 5 6.500 8 7.500 1 .3 2.500-3 4-2.300l4 2c1 .6.500 5-3.500 6-8 1.500-19-8-19-15.500 0-3 1-5 2.500-6.200z" fill="#fff" />
        </svg><b class="count">10</b></div>
        <div class="app"><svg viewBox="0 0 56 56">
          <rect width="56" height="56" rx="13" fill="url(#gGear)" /><circle cx="28" cy="28" r="24" fill="#3b3d40" /><circle cx="28" cy="28" r="20.500" fill="none" stroke="#9b9ea1" stroke-width="3" stroke-dasharray="2 1.200" /><circle cx="28" cy="28" r="15.500" fill="#595c5f" stroke="#b9bbbd" stroke-width="2.600" /><path d="M28 28h15M28 28l-8-13M28 28l-8 13" stroke="#b4b6b8" stroke-width="2.600" /><circle cx="28" cy="28" r="4" fill="#8c8f92" />
        </svg></div>
        <div class="app running"><svg viewBox="0 0 56 56">
          <rect width="56" height="56" rx="13" fill="#f0efec" /><path d="M0 15v-2A13 13 0 0 1 13 0h30a13 13 0 0 1 13 13v2z" fill="#f7c83f" /><path d="M0 17h56" stroke="#b9b5a4" stroke-width="1" stroke-dasharray="1.500 1" /><path d="M0 28h56M0 41.500h56" stroke="#cfcecb" stroke-width="1.200" />
        </svg></div>
        <div class="app running"><svg viewBox="0 0 56 56">
          <path d="M8-1h46a3 3 0 0 1 3 3v42a13 13 0 0 1-13 13H2a3 3 0 0 1-3-3V10A11 11 0 0 1 8-1z" fill="url(#gBars)" /><path d="M10 22.500L23.500 12v22L10 44.500zM32 22.500L45.500 12v22L32 44.500z" fill="#fff" />
        </svg></div>
        <i class="divider"></i>
        <div class="app trash"><svg viewBox="0 0 56 56">
          <path d="M8 6l4-9 7 3 6-4 5 3 6-4 5 6 5 0 3 7-6 6H13z" fill="#e4e4e6" /><path d="M14 3l6-3 3 7 6-6 5 7 7-5" fill="none" stroke="#7d7f86" stroke-width="2" /><path d="M22 1l4 5-5 3z" fill="#59a7cf" /><path d="M36-1l3 6-4 3z" fill="#42302c" /><path d="M28 5l3 3-4 1z" fill="#d7823b" /><path d="M4 6c8 4 40 4 48 0l-6 46c-3 8-33 8-36 0z" fill="url(#gTrash)" /><path d="M4 6c8 4 40 4 48 0" fill="none" stroke="#b8babd" stroke-width="1.200" />
        </svg></div>
      </div>
    </footer>
  </div>
</template>

<style>
body {
  margin: 0;
  background: #120a4e;
}
</style>

<style scoped>
.desktop {
  position: relative;
  width: 2880px;
  height: 1800px;
  overflow: hidden;
  display: flex;
  flex-direction: column;
  background: linear-gradient(90deg, #1a105c, #24108a 50%, #2f14ac) 0 0 / 100% 80px no-repeat, #0a0632;
  font-family: Inter, 'Liberation Sans', sans-serif;
}
.defs { position: absolute; }
svg { display: block; flex: none; overflow: visible; }
i, em { font-style: normal; }
p, h1, h2 { margin: 0; }

/* menu bar */
.menubar {
  position: relative;
  box-sizing: border-box;
  height: 50px;
  flex: none;
  display: flex;
  padding-left: 39px;
  font-size: 26px;
  line-height: 46px;
  color: #e9e6f4;
  white-space: nowrap;
  background: linear-gradient(90deg, #1a105c, #1e0f6e 35%, #24108a 62%, #2c10a2);
  border-bottom: 1px solid #05030f;
}
.menubar svg { fill: #e9e6f4; }
.app-name { width: 117px; margin-left: 39px; font-weight: 700; letter-spacing: 0.1px; }
.menu-item { letter-spacing: -0.25px; font-weight: 500; }
.status { flex: 1; display: flex; align-items: flex-start; justify-content: flex-end; padding-right: 38px; }
.s-bars { margin-left: 33px; }
.s-cloud { margin-left: 34px; }
.menubar .s-cloud { fill: #5b4ba6; }
.s-door { margin-left: 36px; }
.net { width: 132px; margin-left: 34px; padding-top: 5px; font-size: 19px; line-height: 20px; color: #b7b5b4; display: flex; flex-direction: column; }
.tx { display: flex; justify-content: space-between; }
.temp { width: 91px; margin-left: 33px; font-size: 22px; font-weight: 500; color: #fff; line-height: 47px; }
.cpu { width: 47px; font-size: 22px; font-weight: 500; line-height: 47px; }
.s-play { margin-left: 38px; }
.s-key { margin-left: 38px; }
.s-batt { margin-left: 37px; }
.s-link { margin-left: 34px; }
.s-search { margin-left: 37px; }
.s-cc { margin-left: 37px; }
.s-siri { margin-left: 34px; }
.date { width: 146px; margin-left: 32px; font-weight: 500; }
.time { width: 117px; font-weight: 500; letter-spacing: -0.2px; }
.glint { position: absolute; top: 48px; height: 1px; }
.g1 { left: 0; width: 104px; background: linear-gradient(90deg, transparent, #b06fd0); }
.g2 { left: 816px; width: 90px; background: linear-gradient(90deg, #b06fd0, transparent); }
.g3 { left: 1770px; width: 66px; background: linear-gradient(90deg, transparent, #b06fd0); }

/* browser window */
.window {
  box-sizing: border-box;
  height: 1648px;
  flex: none;
  display: flex;
  flex-direction: column;
  overflow: hidden;
  border-radius: 20px;
  background: #dfdfdf;
}
.toolbar {
  box-sizing: border-box;
  height: 104px;
  flex: none;
  display: flex;
  align-items: center;
  padding-left: 40px;
  background: #363539;
  border-top: 2px solid #78777b;
  border-radius: 20px 20px 0 0;
  padding-bottom: 2px;
}
.light { width: 24px; height: 24px; border-radius: 50%; margin-right: 16px; }
.red { background: #ed6a5f; }
.yellow { background: #f5bf4f; }
.green { background: #61c554; }
.t-side { margin-left: 36px; }
.t-sep { width: 2px; height: 36px; margin-left: 13px; background: #4b4a4e; }
.t-down { margin-left: 11px; }
.t-back { margin-left: 51px; }
.t-fwd { margin-left: 57px; }
.t-shield { margin-left: 307px; }
.t-dia { margin-left: 42px; }
.url {
  box-sizing: border-box;
  width: 1166px;
  height: 56px;
  margin-left: 25px;
  border: 2px solid #4a494d;
  border-radius: 14px;
  display: flex;
  align-items: center;
  color: #fff;
  font-size: 26px;
  font-weight: 500;
}
.url span { width: 1128px; padding: 3px 0 0 37px; box-sizing: border-box; text-align: center; }
.t-dl { margin-left: 564px; }
.t-share { margin-left: 42px; }
.t-plus { margin-left: 44px; }
.t-grid { margin-left: 45px; }

.tabs { height: 57px; flex: none; box-sizing: border-box; display: flex; border-bottom: 1px solid #000; background: #1e1e20; }
.tab {
  box-sizing: border-box;
  width: 576px;
  flex: none;
  padding-left: 3px;
  display: flex;
  align-items: center;
  justify-content: center;
  gap: 11px;
  background: #1e1e20;
  border-top: 1px solid #000;
  border-right: 2px solid #4b4b4d;
  font-size: 22px;
  letter-spacing: -0.05px;
  color: #97979a;
  white-space: nowrap;
}
.dense { letter-spacing: -0.15px; gap: 12px; padding-left: 6px; }
.tab:nth-child(4) { width: 578px; }
.tab.active { width: 574px; background: #363539; color: #fff; border-color: #363539; font-weight: 500; }
.badge { width: 32px; height: 32px; border-radius: 6px; background: #9292a0; color: #fff; font-weight: 700; line-height: 32px; text-align: center; }

/* form */
.page {
  width: 1303px;
  padding: 38px 0 0 40px;
  font-family: 'Liberation Serif', 'Times New Roman', serif;
  font-size: 32px;
  line-height: 36px;
  color: #000;
  white-space: nowrap;
}
.steps { letter-spacing: -0.04px; }
h1 { font-size: 64px; height: 74px; line-height: 76px; color: #eb3323; }
h2 { font-size: 48px; height: 56px; line-height: 58px; color: #eb3323; }
h2.honor { margin-bottom: 4px; }
em { color: #bc3c58; }
.row { height: 44px; line-height: 44px; display: flex; align-items: center; justify-content: space-between; }
.strong { font-weight: 700; }
.input {
  box-sizing: border-box;
  width: 290px;
  height: 38px;
  margin-top: 2px;
  background: #fff;
  border: 1px solid #d2d2d2;
  border-top-color: #c6c6c6;
  border-bottom: 2px solid #c0c0c0;
}
.row > .input:last-child { margin-right: -1px; }
.picker { margin-bottom: 2px; }
.picker + .row .input,
p + .row .input { height: 36px; margin-top: 4px; }
.select {
  box-sizing: border-box;
  height: 32px;
  margin: 1px 1px 0 0;
  padding: 0 4px 0 14px;
  display: flex;
  align-items: center;
  justify-content: space-between;
  min-width: 176px;
  gap: 19px;
  border-radius: 8px;
  background: #fff;
  box-shadow: 0 1px 2px rgba(0, 0, 0, 0.35);
  font: 400 22px/32px Inter, 'Liberation Sans', sans-serif;
  letter-spacing: -0.05px;
  color: #262626;
}
.picker .select { margin-top: 5px; }
.select svg { border-radius: 6px; background: linear-gradient(#4c94f8, #3377f6); }
.select path { fill: none; stroke: #fff; stroke-width: 2.4; stroke-linecap: round; stroke-linejoin: round; }
.choice { display: flex; align-items: center; }
.radio, .check {
  width: 23px;
  height: 23px;
  margin-top: 6px;
  background: linear-gradient(#f4f4f4, #fff 30%);
  box-shadow: inset 0 0 0 1px #d2d2d2, inset 0 1px 1px rgba(0, 0, 0, 0.15);
}
.radio { border-radius: 50%; }
.check { border-radius: 5px; }
.spaced i { margin-right: 9px; }
.purpose { display: flex; justify-content: space-between; margin-bottom: 4px; }
.options { padding-top: 40px; }

/* dock */
.shelf {
  position: relative;
  height: 102px;
  flex: none;
  background:
    linear-gradient(180deg, rgba(3, 2, 18, 0.88), rgba(3, 2, 18, 0) 85%),
    linear-gradient(90deg, #170d58, #140b5c 45%, #0d0860 75%, #0e0967 86%, #241499 92%, #2a17a6);
}
.wallpaper { position: absolute; left: 0; top: 0; }
.dock {
  position: absolute;
  left: 375px;
  top: 2px;
  box-sizing: border-box;
  width: 2131px;
  height: 90px;
  padding: 12px 0 0 3px;
  display: flex;
  border: 2px solid rgba(140, 130, 190, 0.4);
  border-radius: 26px;
  background: linear-gradient(90deg, #1e1843, #1c1748 30%, #211a52 45%, #35276c 53%, #30256a 58%, #1c1650 64%, #1a1450 85%, #221a66);
  box-shadow: 0 0 60px 6px rgba(0, 0, 0, 0.25);
}
.app { position: relative; width: 72px; padding-left: 8px; box-sizing: border-box; }
.app svg { width: 56px; height: 56px; }
.running::after {
  content: '';
  position: absolute;
  left: 32px;
  top: 64px;
  width: 8px;
  height: 8px;
  border-radius: 50%;
  background: #9f99cb;
}
.progress {
  position: absolute;
  left: 2px;
  top: 64px;
  box-sizing: border-box;
  width: 68px;
  height: 8px;
  border: 2px solid #9f99c4;
  border-radius: 4px;
  background: linear-gradient(90deg, #9f99c4 43%, #1c1744 43%);
}
.count {
  position: absolute;
  right: 1px;
  top: -5px;
  min-width: 26px;
  height: 25px;
  border-radius: 13px;
  background: #e5493c;
  color: #fff;
  font: 400 14px/25px Inter, sans-serif;
  text-align: center;
}
.wide { min-width: 41px; }
.divider { width: 1px; height: 66px; margin: -2px 14px 0 17px; background: #5d5690; }
</style>
